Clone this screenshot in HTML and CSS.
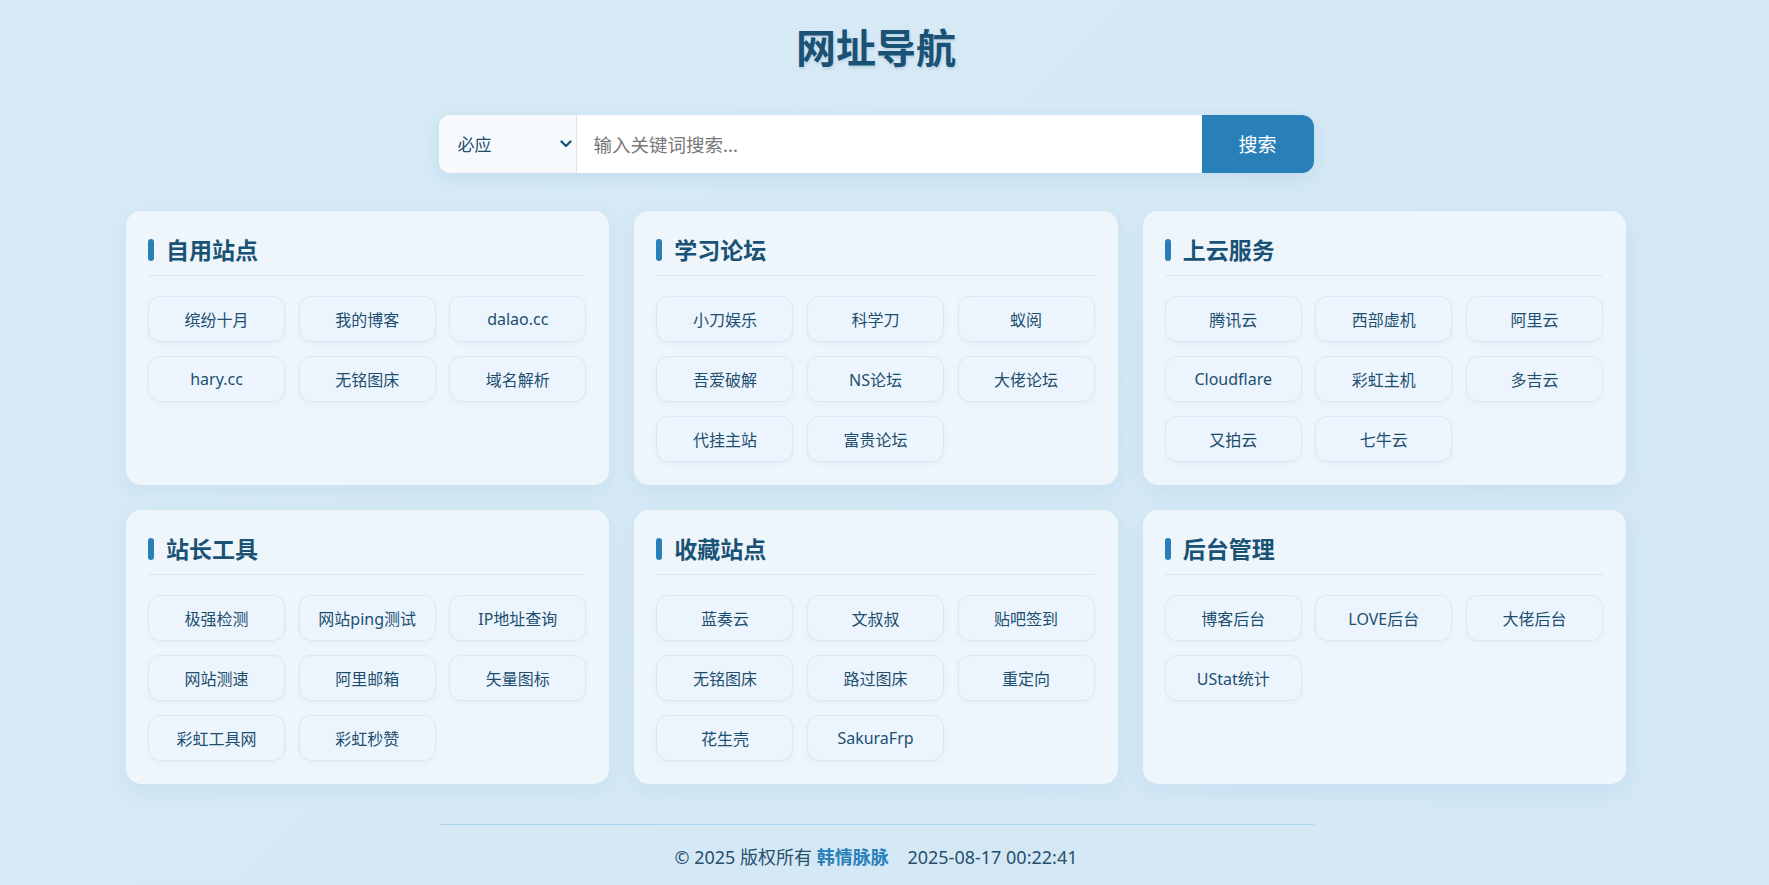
FILE: index.html
```html
<!DOCTYPE html>
<html lang="zh-CN">

<head>
    <meta charset="UTF-8">
    <meta name="viewport" content="width=device-width, initial-scale=1.0">
    <title>网址导航</title>
    <link rel="stylesheet" href="styles.css">
</head>

<body>
    <div class="page">
        <h1 class="site-title">网址导航</h1>

        <form class="search-bar" onsubmit="return false;">
            <div class="engine">
                <select class="engine-select">
                    <option>必应</option>
                    <option>百度</option>
                    <option>谷歌</option>
                </select>
                <svg class="engine-arrow" viewBox="0 0 12 8" width="12" height="8">
                    <path d="M1.5 1.5 L6 6 L10.5 1.5" fill="none" stroke="currentColor" stroke-width="2.2" stroke-linecap="round" stroke-linejoin="round"/>
                </svg>
            </div>
            <input type="text" class="search-input" placeholder="输入关键词搜索...">
            <button class="search-btn">搜索</button>
        </form>

        <div class="card-grid">
            <div class="card">
                <h2 class="card-title">自用站点</h2>
                <div class="links">
                    <a href="#">缤纷十月</a>
                    <a href="#">我的博客</a>
                    <a href="#">dalao.cc</a>
                    <a href="#">hary.cc</a>
                    <a href="#">无铭图床</a>
                    <a href="#">域名解析</a>
                </div>
            </div>

            <div class="card">
                <h2 class="card-title">学习论坛</h2>
                <div class="links">
                    <a href="#">小刀娱乐</a>
                    <a href="#">科学刀</a>
                    <a href="#">蚁阅</a>
                    <a href="#">吾爱破解</a>
                    <a href="#">NS论坛</a>
                    <a href="#">大佬论坛</a>
                    <a href="#">代挂主站</a>
                    <a href="#">富贵论坛</a>
                </div>
            </div>

            <div class="card">
                <h2 class="card-title">上云服务</h2>
                <div class="links">
                    <a href="#">腾讯云</a>
                    <a href="#">西部虚机</a>
                    <a href="#">阿里云</a>
                    <a href="#">Cloudflare</a>
                    <a href="#">彩虹主机</a>
                    <a href="#">多吉云</a>
                    <a href="#">又拍云</a>
                    <a href="#">七牛云</a>
                </div>
            </div>

            <div class="card">
                <h2 class="card-title">站长工具</h2>
                <div class="links">
                    <a href="#">极强检测</a>
                    <a href="#">网站ping测试</a>
                    <a href="#">IP地址查询</a>
                    <a href="#">网站测速</a>
                    <a href="#">阿里邮箱</a>
                    <a href="#">矢量图标</a>
                    <a href="#">彩虹工具网</a>
                    <a href="#">彩虹秒赞</a>
                </div>
            </div>

            <div class="card">
                <h2 class="card-title">收藏站点</h2>
                <div class="links">
                    <a href="#">蓝奏云</a>
                    <a href="#">文叔叔</a>
                    <a href="#">贴吧签到</a>
                    <a href="#">无铭图床</a>
                    <a href="#">路过图床</a>
                    <a href="#">重定向</a>
                    <a href="#">花生壳</a>
                    <a href="#">SakuraFrp</a>
                </div>
            </div>

            <div class="card">
                <h2 class="card-title">后台管理</h2>
                <div class="links">
                    <a href="#">博客后台</a>
                    <a href="#">LOVE后台</a>
                    <a href="#">大佬后台</a>
                    <a href="#">UStat统计</a>
                </div>
            </div>
        </div>

        <footer class="footer">
            <span>© 2025 版权所有 <a href="#" class="owner">韩情脉脉</a></span>
            <span class="clock">2025-08-17 00:22:41</span>
        </footer>
    </div>
</body>

</html>
```

FILE: styles.css
```css
body {
    font-family: "Noto Sans", "Noto Sans CJK SC", sans-serif;
    margin: 0;
    padding-right: 17px;
    background: linear-gradient(135deg, #d8eaf6, #d3e7f4);
    color: #1d4e6f;
    min-height: 100vh;
}

.page {
    max-width: 1500px;
    margin: 0 auto;
    padding-top: 20px;
}

.site-title {
    margin: 0;
    text-align: center;
    font-size: 40px;
    line-height: 56px;
    font-weight: 700;
    color: #1a5276;
    text-shadow: 1px 2px 3px rgba(26, 82, 118, 0.15);
}

.search-bar {
    display: flex;
    width: 875px;
    height: 58px;
    margin: 39px auto 38px;
    border-radius: 12px;
    overflow: hidden;
    background: #ffffff;
    box-shadow: 0 5px 18px rgba(41, 128, 185, 0.12);
}

.engine {
    position: relative;
    width: 137px;
    flex-shrink: 0;
    background-color: #f7fafc;
    border-right: 1px solid #dde6ee;
}

.engine-select {
    appearance: none;
    -webkit-appearance: none;
    width: 100%;
    height: 100%;
    border: none;
    outline: none;
    background: transparent;
    padding: 0 0 0 19px;
    font-family: inherit;
    font-size: 17px;
    color: #1d4e6f;
}

.engine-arrow {
    position: absolute;
    right: 4px;
    top: 25px;
    color: #1a5276;
    pointer-events: none;
}

.search-input {
    flex-grow: 1;
    border: none;
    outline: none;
    padding: 0 17px;
    font-family: inherit;
    font-size: 18.5px;
    color: #333;
}

.search-input::placeholder {
    color: #777;
}

.search-btn {
    width: 112px;
    flex-shrink: 0;
    border: none;
    background-color: #2980b9;
    color: white;
    font-family: inherit;
    font-size: 19px;
    cursor: pointer;
}

.search-btn:hover {
    background-color: #2471a3;
}

.card-grid {
    display: grid;
    grid-template-columns: repeat(3, 1fr);
    gap: 25px;
}

.card {
    background-color: #eef6fc;
    border-radius: 15px;
    padding: 21px 23px 23px 22px;
    box-shadow: 0 6px 20px rgba(41, 128, 185, 0.08);
}

.card-title {
    display: flex;
    align-items: center;
    margin: 0 0 20px;
    padding-bottom: 7px;
    border-bottom: 1px solid #dbe6ef;
    font-size: 23px;
    line-height: 36px;
    font-weight: 700;
    color: #1a5276;
}

.card-title::before {
    content: "";
    width: 6px;
    height: 22px;
    border-radius: 3px;
    background-color: #2980b9;
    margin-right: 12px;
}

.links {
    display: grid;
    grid-template-columns: repeat(3, 1fr);
    gap: 14px 13.5px;
}

.links a {
    display: flex;
    align-items: center;
    justify-content: center;
    height: 46px;
    box-sizing: border-box;
    border: 1px solid #d9e7f3;
    border-radius: 12px;
    background-color: #ecf5fd;
    box-shadow: 0 2px 6px rgba(41, 128, 185, 0.06);
    color: #1d4e6f;
    text-decoration: none;
    font-size: 16px;
    transition: background-color 0.3s;
}

.links a:hover {
    background-color: #d6eaf8;
}

.footer {
    width: 875px;
    margin: 40px auto 0;
    padding: 20px 0 24px;
    border-top: 1px solid #add4ef;
    text-align: center;
    font-size: 18px;
    line-height: 24px;
    color: #27506e;
}

.owner {
    color: #2980b9;
    font-weight: 700;
    text-decoration: none;
}

.clock {
    margin-left: 14px;
}
```
